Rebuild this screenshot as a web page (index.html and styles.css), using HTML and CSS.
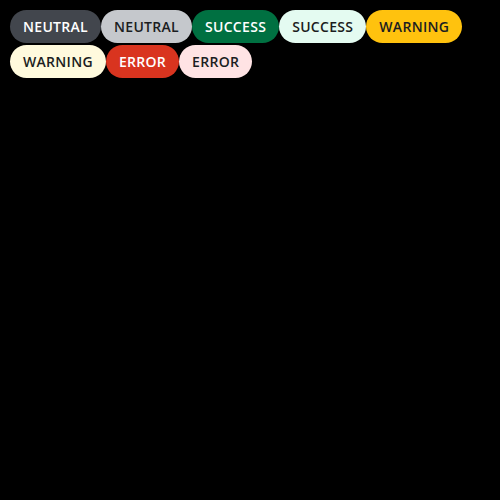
FILE: index.html
```html
<!DOCTYPE html>
<html>
<head>
<meta charset="utf-8">
<link rel="stylesheet" href="styles.css">
</head>
<body>
<div class="list">
  <span class="badge neutral-strong">Neutral</span>
  <span class="badge neutral-soft">Neutral</span>
  <span class="badge success-strong">Success</span>
  <span class="badge success-soft">Success</span>
  <span class="badge warning-strong">Warning</span>
  <span class="badge warning-soft">Warning</span>
  <span class="badge error-strong">Error</span>
  <span class="badge error-soft">Error</span>
</div>
</body>
</html>
```
FILE: styles.css
```css
html, body {
  margin: 0;
  background: #000;
}
body {
  padding: 10px;
  font-family: "Open Sans", sans-serif;
}
.list {
  display: flex;
  flex-wrap: wrap;
  row-gap: 2px;
  column-gap: 0;
}
.badge {
  display: inline-flex;
  align-items: center;
  height: 33px;
  padding: 0 13px;
  border-radius: 17px;
  font-size: 14px;
  font-weight: 600;
  letter-spacing: 0.3px;
  text-transform: uppercase;
  box-sizing: border-box;
}
.neutral-strong { background: #42464d; color: #fff; }
.neutral-soft { background: #c5c8cc; color: #1b1d21; }
.success-strong { background: #007041; color: #fff; }
.success-soft { background: #e4fbf1; color: #1b1d21; }
.warning-strong { background: #ffc20e; color: #1b1d21; }
.warning-soft { background: #fffadd; color: #1b1d21; }
.error-strong { background: #d9341f; color: #fff; }
.error-soft { background: #ffe3e4; color: #1b1d21; }
```
